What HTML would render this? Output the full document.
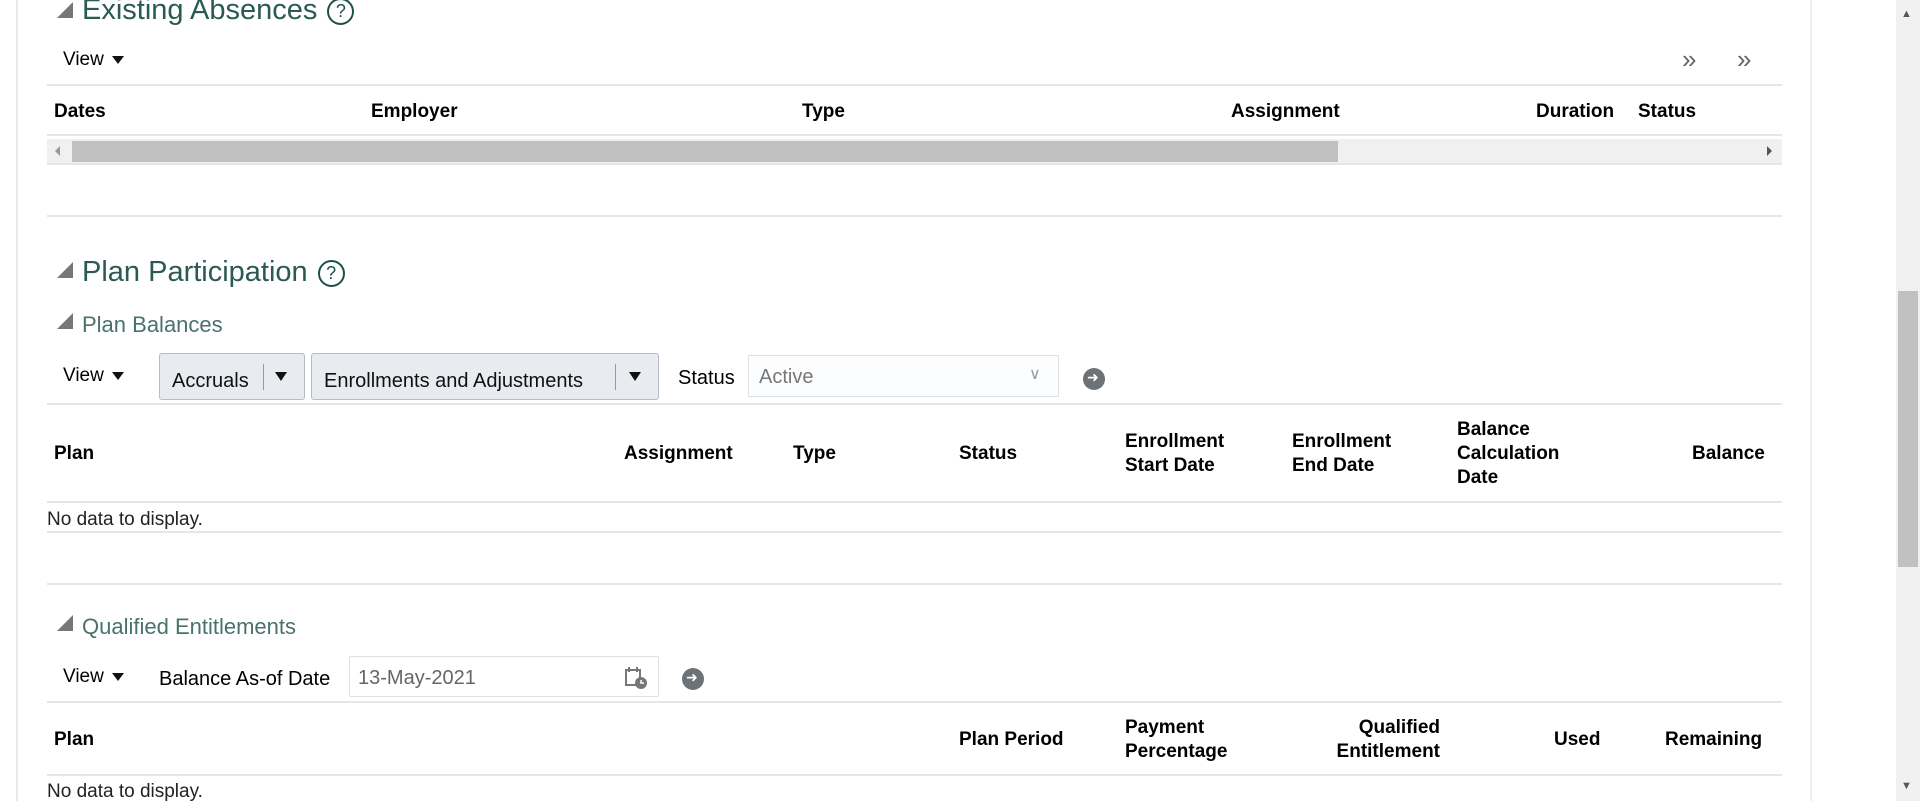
<!DOCTYPE html>
<html><head><meta charset="utf-8"><style>
*{margin:0;padding:0;box-sizing:border-box}
body{width:1920px;height:801px;overflow:hidden;background:#fff;font-family:"Liberation Sans",Arial,sans-serif;color:#000;position:relative}
.a{position:absolute;white-space:nowrap}
.hl{position:absolute;left:47px;width:1735px;height:2px;background:#e4e6e8}
.tri{position:absolute;width:0;height:0;border-left:16px solid transparent;border-bottom:16px solid #777}
.h1{font-size:29px;color:#2a5a53;font-weight:300}
.h2{font-size:22px;color:#4a726c}
.th{font-size:19px;font-weight:bold;line-height:24px}
.view{font-size:19px}
.view:after{content:"";display:inline-block;margin-left:8px;border-left:6px solid transparent;border-right:6px solid transparent;border-top:8px solid #111;vertical-align:middle}
.q{display:inline-block;width:27px;height:27px;border:2px solid #1d5048;border-radius:50%;font-size:18px;text-align:center;line-height:23px;color:#1d5048;vertical-align:middle;margin-left:10px}
.btn{position:absolute;height:47px;border:1px solid #b5bcc4;border-radius:3px;background:#e8ecf0;font-size:20px;color:#111}
.go{position:absolute;width:22px;height:22px;border-radius:50%;background:#6d7277}
.go:after{content:"➜";position:absolute;left:4px;top:1px;color:#fff;font-size:14px}
.nd{font-size:19px;color:#222}
</style></head><body>
<div class="a" style="left:16px;top:0;width:2px;height:801px;background:#e6e8ea"></div>
<div class="a" style="left:1810px;top:0;width:2px;height:801px;background:#eceef0"></div>
<div class="a" style="left:1896px;top:0;width:24px;height:801px;background:#f1f1f1"></div>
<div class="a" style="left:1898px;top:291px;width:20px;height:276px;background:#c1c1c1"></div>
<div class="a" style="left:1901px;top:8px;font-size:11px;color:#555">▲</div>
<div class="a" style="left:1901px;top:780px;font-size:11px;color:#555">▼</div>

<div class="tri" style="left:57px;top:2px"></div>
<div class="a h1" style="left:82px;top:-6px">Existing Absences<span class="q">?</span></div>
<div class="a view" style="left:63px;top:49px">View</div>
<div class="a" style="left:1682px;top:44px;font-size:26px;color:#666">»</div>
<div class="a" style="left:1737px;top:44px;font-size:26px;color:#666">»</div>
<div class="hl" style="top:84px"></div>
<div class="a th" style="left:54px;top:100px">Dates</div>
<div class="a th" style="left:371px;top:100px">Employer</div>
<div class="a th" style="left:802px;top:100px">Type</div>
<div class="a th" style="left:1231px;top:100px">Assignment</div>
<div class="a th" style="left:1536px;top:100px">Duration</div>
<div class="a th" style="left:1638px;top:100px">Status</div>
<div class="hl" style="top:134px"></div>
<div class="a" style="left:47px;top:139px;width:1735px;height:24px;background:#f0f0f0"></div>
<div class="a" style="left:72px;top:141px;width:1266px;height:21px;background:#c0c0c0"></div>
<div class="a" style="left:55px;top:146px;border-right:5px solid #999;border-top:5px solid transparent;border-bottom:5px solid transparent"></div>
<div class="a" style="left:1767px;top:146px;border-left:5px solid #555;border-top:5px solid transparent;border-bottom:5px solid transparent"></div>
<div class="hl" style="top:163px"></div>
<div class="hl" style="top:215px"></div>

<div class="tri" style="left:57px;top:262px"></div>
<div class="a h1" style="left:82px;top:256px">Plan Participation<span class="q">?</span></div>
<div class="tri" style="left:57px;top:313px"></div>
<div class="a h2" style="left:82px;top:312px">Plan Balances</div>
<div class="a view" style="left:63px;top:365px">View</div>
<div class="btn" style="left:159px;top:353px;width:146px"><span class="a" style="left:12px;top:16px">Accruals</span><span class="a" style="left:103px;top:10px;width:1px;height:26px;background:#999"></span><span class="a" style="left:115px;top:18px;border-left:6px solid transparent;border-right:6px solid transparent;border-top:9px solid #111"></span></div>
<div class="btn" style="left:311px;top:353px;width:348px"><span class="a" style="left:12px;top:16px">Enrollments and Adjustments</span><span class="a" style="left:303px;top:10px;width:1px;height:26px;background:#999"></span><span class="a" style="left:317px;top:18px;border-left:6px solid transparent;border-right:6px solid transparent;border-top:9px solid #111"></span></div>
<div class="a" style="left:678px;top:367px;font-size:20px">Status</div>
<div class="a" style="left:748px;top:355px;width:311px;height:42px;border:1px solid #dfe2e5;background:#fcfdfe"><span class="a" style="left:10px;top:10px;font-size:20px;color:#777">Active</span><span class="a" style="left:280px;top:8px;font-size:16px;color:#999">∨</span></div>
<div class="go" style="left:1083px;top:368px"></div>
<div class="hl" style="top:403px"></div>
<div class="a th" style="left:54px;top:442px">Plan</div>
<div class="a th" style="left:624px;top:442px">Assignment</div>
<div class="a th" style="left:793px;top:442px">Type</div>
<div class="a th" style="left:959px;top:442px">Status</div>
<div class="a th" style="left:1125px;top:430px">Enrollment<br>Start Date</div>
<div class="a th" style="left:1292px;top:430px">Enrollment<br>End Date</div>
<div class="a th" style="left:1457px;top:418px">Balance<br>Calculation<br>Date</div>
<div class="a th" style="left:1692px;top:442px">Balance</div>
<div class="hl" style="top:501px"></div>
<div class="a nd" style="left:47px;top:509px">No data to display.</div>
<div class="hl" style="top:531px"></div>
<div class="hl" style="top:583px"></div>

<div class="tri" style="left:57px;top:615px"></div>
<div class="a h2" style="left:82px;top:614px">Qualified Entitlements</div>
<div class="a view" style="left:63px;top:666px">View</div>
<div class="a" style="left:159px;top:668px;font-size:20px">Balance As-of Date</div>
<div class="a" style="left:349px;top:656px;width:310px;height:41px;border:1px solid #dfe2e5;border-radius:2px"><span class="a" style="left:8px;top:10px;font-size:20px;color:#666">13-May-2021</span>
<svg class="a" style="left:274px;top:9px" width="26" height="24" viewBox="0 0 26 24"><rect x="2" y="4" width="14" height="15" fill="none" stroke="#777" stroke-width="2"/><rect x="4" y="1" width="2" height="5" fill="#777"/><rect x="12" y="1" width="2" height="5" fill="#777"/><circle cx="17" cy="17" r="6" fill="#777"/><path d="M17 14v3h3" stroke="#fff" stroke-width="1.5" fill="none"/></svg></div>
<div class="go" style="left:682px;top:668px"></div>
<div class="hl" style="top:701px"></div>
<div class="a th" style="left:54px;top:728px">Plan</div>
<div class="a th" style="left:959px;top:728px">Plan Period</div>
<div class="a th" style="left:1125px;top:716px">Payment<br>Percentage</div>
<div class="a th" style="left:1320px;top:716px;text-align:right;width:120px">Qualified<br>Entitlement</div>
<div class="a th" style="left:1554px;top:728px">Used</div>
<div class="a th" style="left:1665px;top:728px">Remaining</div>
<div class="hl" style="top:774px"></div>
<div class="a nd" style="left:47px;top:781px">No data to display.</div>
</body></html>
